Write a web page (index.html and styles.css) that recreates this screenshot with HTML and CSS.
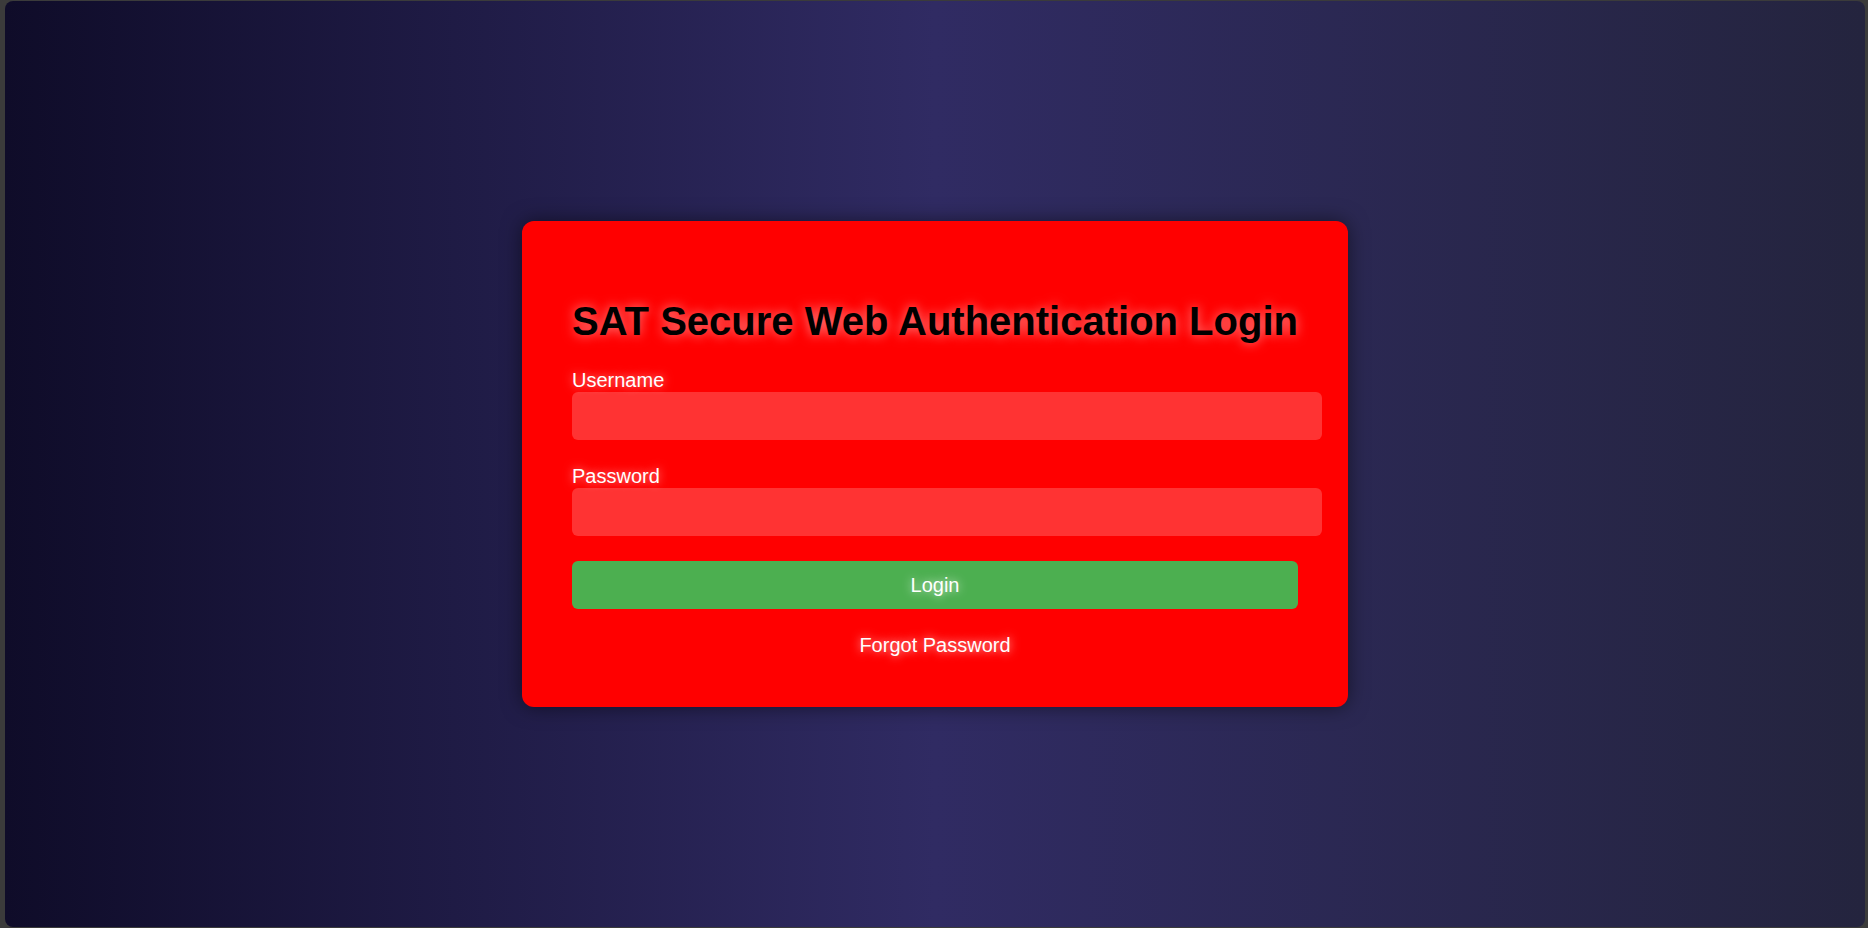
FILE: index.html
```html
<!DOCTYPE html>
<html lang="en">
<head>
<meta charset="utf-8">
<title>SAT Secure Web Authentication Login</title>
<link rel="stylesheet" href="styles.css">
</head>
<body>
<div class="frame">
  <div class="card">
    <h1 class="title">SAT Secure Web Authentication Login</h1>
    <form class="form">
      <div class="group">
        <label class="label" for="username">Username</label>
        <input class="field" id="username" type="text">
      </div>
      <div class="group">
        <label class="label" for="password">Password</label>
        <input class="field" id="password" type="password">
      </div>
      <button class="btn" type="button">Login</button>
      <a class="forgot" href="#">Forgot Password</a>
    </form>
  </div>
</div>
</body>
</html>
```

FILE: styles.css
```css
html, body {
  margin: 0;
  padding: 0;
  height: 100%;
}
body {
  background: #3b3b3b;
  font-family: "Liberation Sans", Arial, sans-serif;
  padding: 1px 3px 1px 5px;
  box-sizing: border-box;
}
.frame {
  height: 100%;
  border-radius: 8px;
  background: linear-gradient(to right, #0f0c29, #302b63, #24243e);
  display: flex;
  align-items: center;
  justify-content: center;
}
.card {
  width: 726px;
  padding: 50px;
  background: #ff0000;
  border-radius: 12px;
  box-shadow: 0 0 20px rgba(0, 0, 0, 0.5);
}
.title {
  margin: 27px 0 25px;
  font-size: 40px;
  line-height: 46px;
  font-weight: bold;
  color: #000;
  text-shadow: 0 0 12px rgba(255, 255, 255, 0.55);
}
.form {
  display: flex;
  flex-direction: column;
}
.group {
  margin-bottom: 25px;
}
.label {
  display: block;
  font-size: 20px;
  line-height: 23px;
  color: #fff;
  text-shadow: 0 0 10px rgba(255, 255, 255, 0.6);
}
.field {
  display: block;
  box-sizing: content-box;
  width: 100%;
  height: 24px;
  padding: 12px;
  border: none;
  border-radius: 6px;
  background: rgba(255, 255, 255, 0.2);
  color: #fff;
  font-family: inherit;
  font-size: 20px;
  outline: none;
}
.btn {
  width: 726px;
  height: 48px;
  border: none;
  border-radius: 6px;
  background: #4caf50;
  color: #fff;
  font-family: inherit;
  font-size: 20px;
  text-shadow: 0 0 10px rgba(255, 255, 255, 0.8);
  cursor: pointer;
}
.forgot {
  margin-top: 25px;
  align-self: center;
  font-size: 20px;
  line-height: 23px;
  color: #fff;
  text-decoration: none;
  text-shadow: 0 0 10px rgba(255, 255, 255, 0.8);
}
```
